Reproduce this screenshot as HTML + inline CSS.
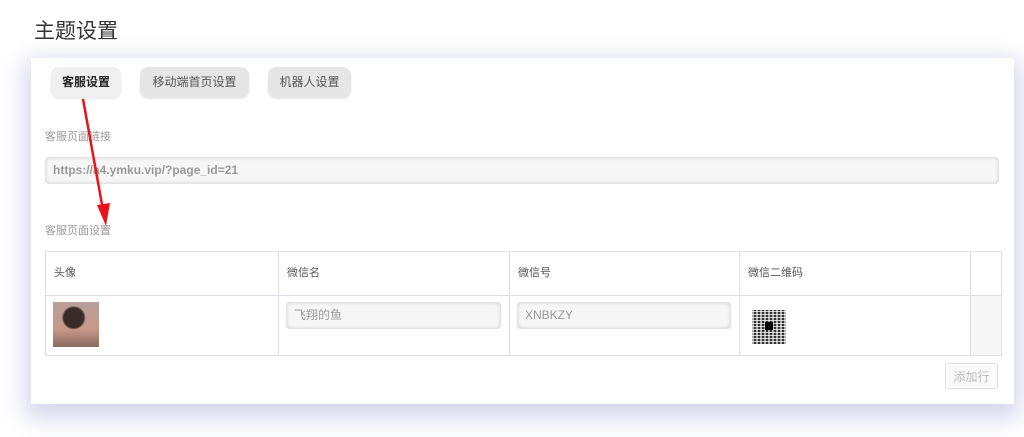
<!DOCTYPE html>
<html><head><meta charset="utf-8"><style>
body{margin:0;width:1024px;height:437px;background:#fff;position:relative;overflow:hidden;font-family:"Liberation Sans","Noto Sans CJK SC",sans-serif;}
.abs{position:absolute}
h1{position:absolute;left:34px;top:15px;margin:0;font-size:21px;font-weight:normal;color:#333}
.card{position:absolute;left:31px;top:58px;width:983px;height:346px;background:#fff;box-shadow:0 8px 22px 6px rgba(160,165,215,0.45)}
.tab{position:absolute;top:67px;height:31px;line-height:31px;border-radius:8px;background:#e6e6e6;font-size:12px;color:#555;text-align:center;box-shadow:0 1px 2px rgba(0,0,0,.1)}
.lbl{position:absolute;font-size:11px;color:#999}
.inp{position:absolute;background:#f6f6f6;border-radius:4px;box-shadow:inset 0 0 5px rgba(0,0,0,.18);font-size:12px;color:#999;padding-left:8px;box-sizing:border-box}
table{position:absolute;left:45px;top:251px;width:956px;table-layout:fixed;border-collapse:collapse;font-size:11px;color:#555}
td{border:1px solid #dde0e4;padding:0 0 0 8px;vertical-align:top}
</style></head><body>
<h1>主题设置</h1>
<div class="card"></div>
<div class="tab" style="left:51px;width:70px;background:#f0f0f0;color:#222;font-weight:bold">客服设置</div>
<div class="tab" style="left:140px;width:109px">移动端首页设置</div>
<div class="tab" style="left:268px;width:83px">机器人设置</div>
<div class="lbl" style="left:45px;top:128px">客服页面链接</div>
<div class="inp" style="left:45px;top:157px;width:954px;height:27px;line-height:27px;font-weight:bold;color:#999">https://a4.ymku.vip/?page_id=21</div>
<div class="lbl" style="left:45px;top:222px">客服页面设置</div>
<table>
<colgroup><col style="width:233px"><col style="width:231px"><col style="width:230px"><col style="width:231px"><col style="width:31px"></colgroup>
<tr style="height:43px"><td style="line-height:43px">头像</td><td style="line-height:43px">微信名</td><td style="line-height:43px">微信号</td><td style="line-height:43px">微信二维码</td><td style="padding:0"></td></tr>
<tr style="height:60px"><td></td><td></td><td></td><td></td><td style="background:#f7f7f7;padding:0"></td></tr>
</table>
<div class="abs" style="left:53px;top:302px;width:46px;height:45px;background:radial-gradient(circle at 45% 35%,#3a2a28 0 10px,transparent 12px),linear-gradient(180deg,#b8a09a,#c89888 60%,#8a6a60)"></div>
<div class="inp" style="left:286px;top:302px;width:215px;height:27px;line-height:27px">飞翔的鱼</div>
<div class="inp" style="left:517px;top:302px;width:214px;height:27px;line-height:27px">XNBKZY</div>
<div class="abs" style="left:752px;top:310px;width:34px;height:34px;background:repeating-linear-gradient(90deg,rgba(255,255,255,.6) 0 2px,transparent 2px 4px),repeating-linear-gradient(0deg,#333 0 2px,#ccc 2px 3px);"></div>
<div class="abs" style="left:765px;top:322px;width:8px;height:8px;background:#000"></div>
<div class="abs" style="left:945px;top:363px;width:53px;height:26px;border:1px solid #e2e2e2;border-radius:3px;background:#fafafa;color:#bbb;font-size:12px;line-height:26px;text-align:center;box-sizing:border-box">添加行</div>
<svg class="abs" style="left:0;top:0" width="1024" height="437"><line x1="83" y1="99" x2="103" y2="210" stroke="#e8141a" stroke-width="2.5"/><polygon points="97,205 110,203 106,226" fill="#e8141a"/></svg>
</body></html>
